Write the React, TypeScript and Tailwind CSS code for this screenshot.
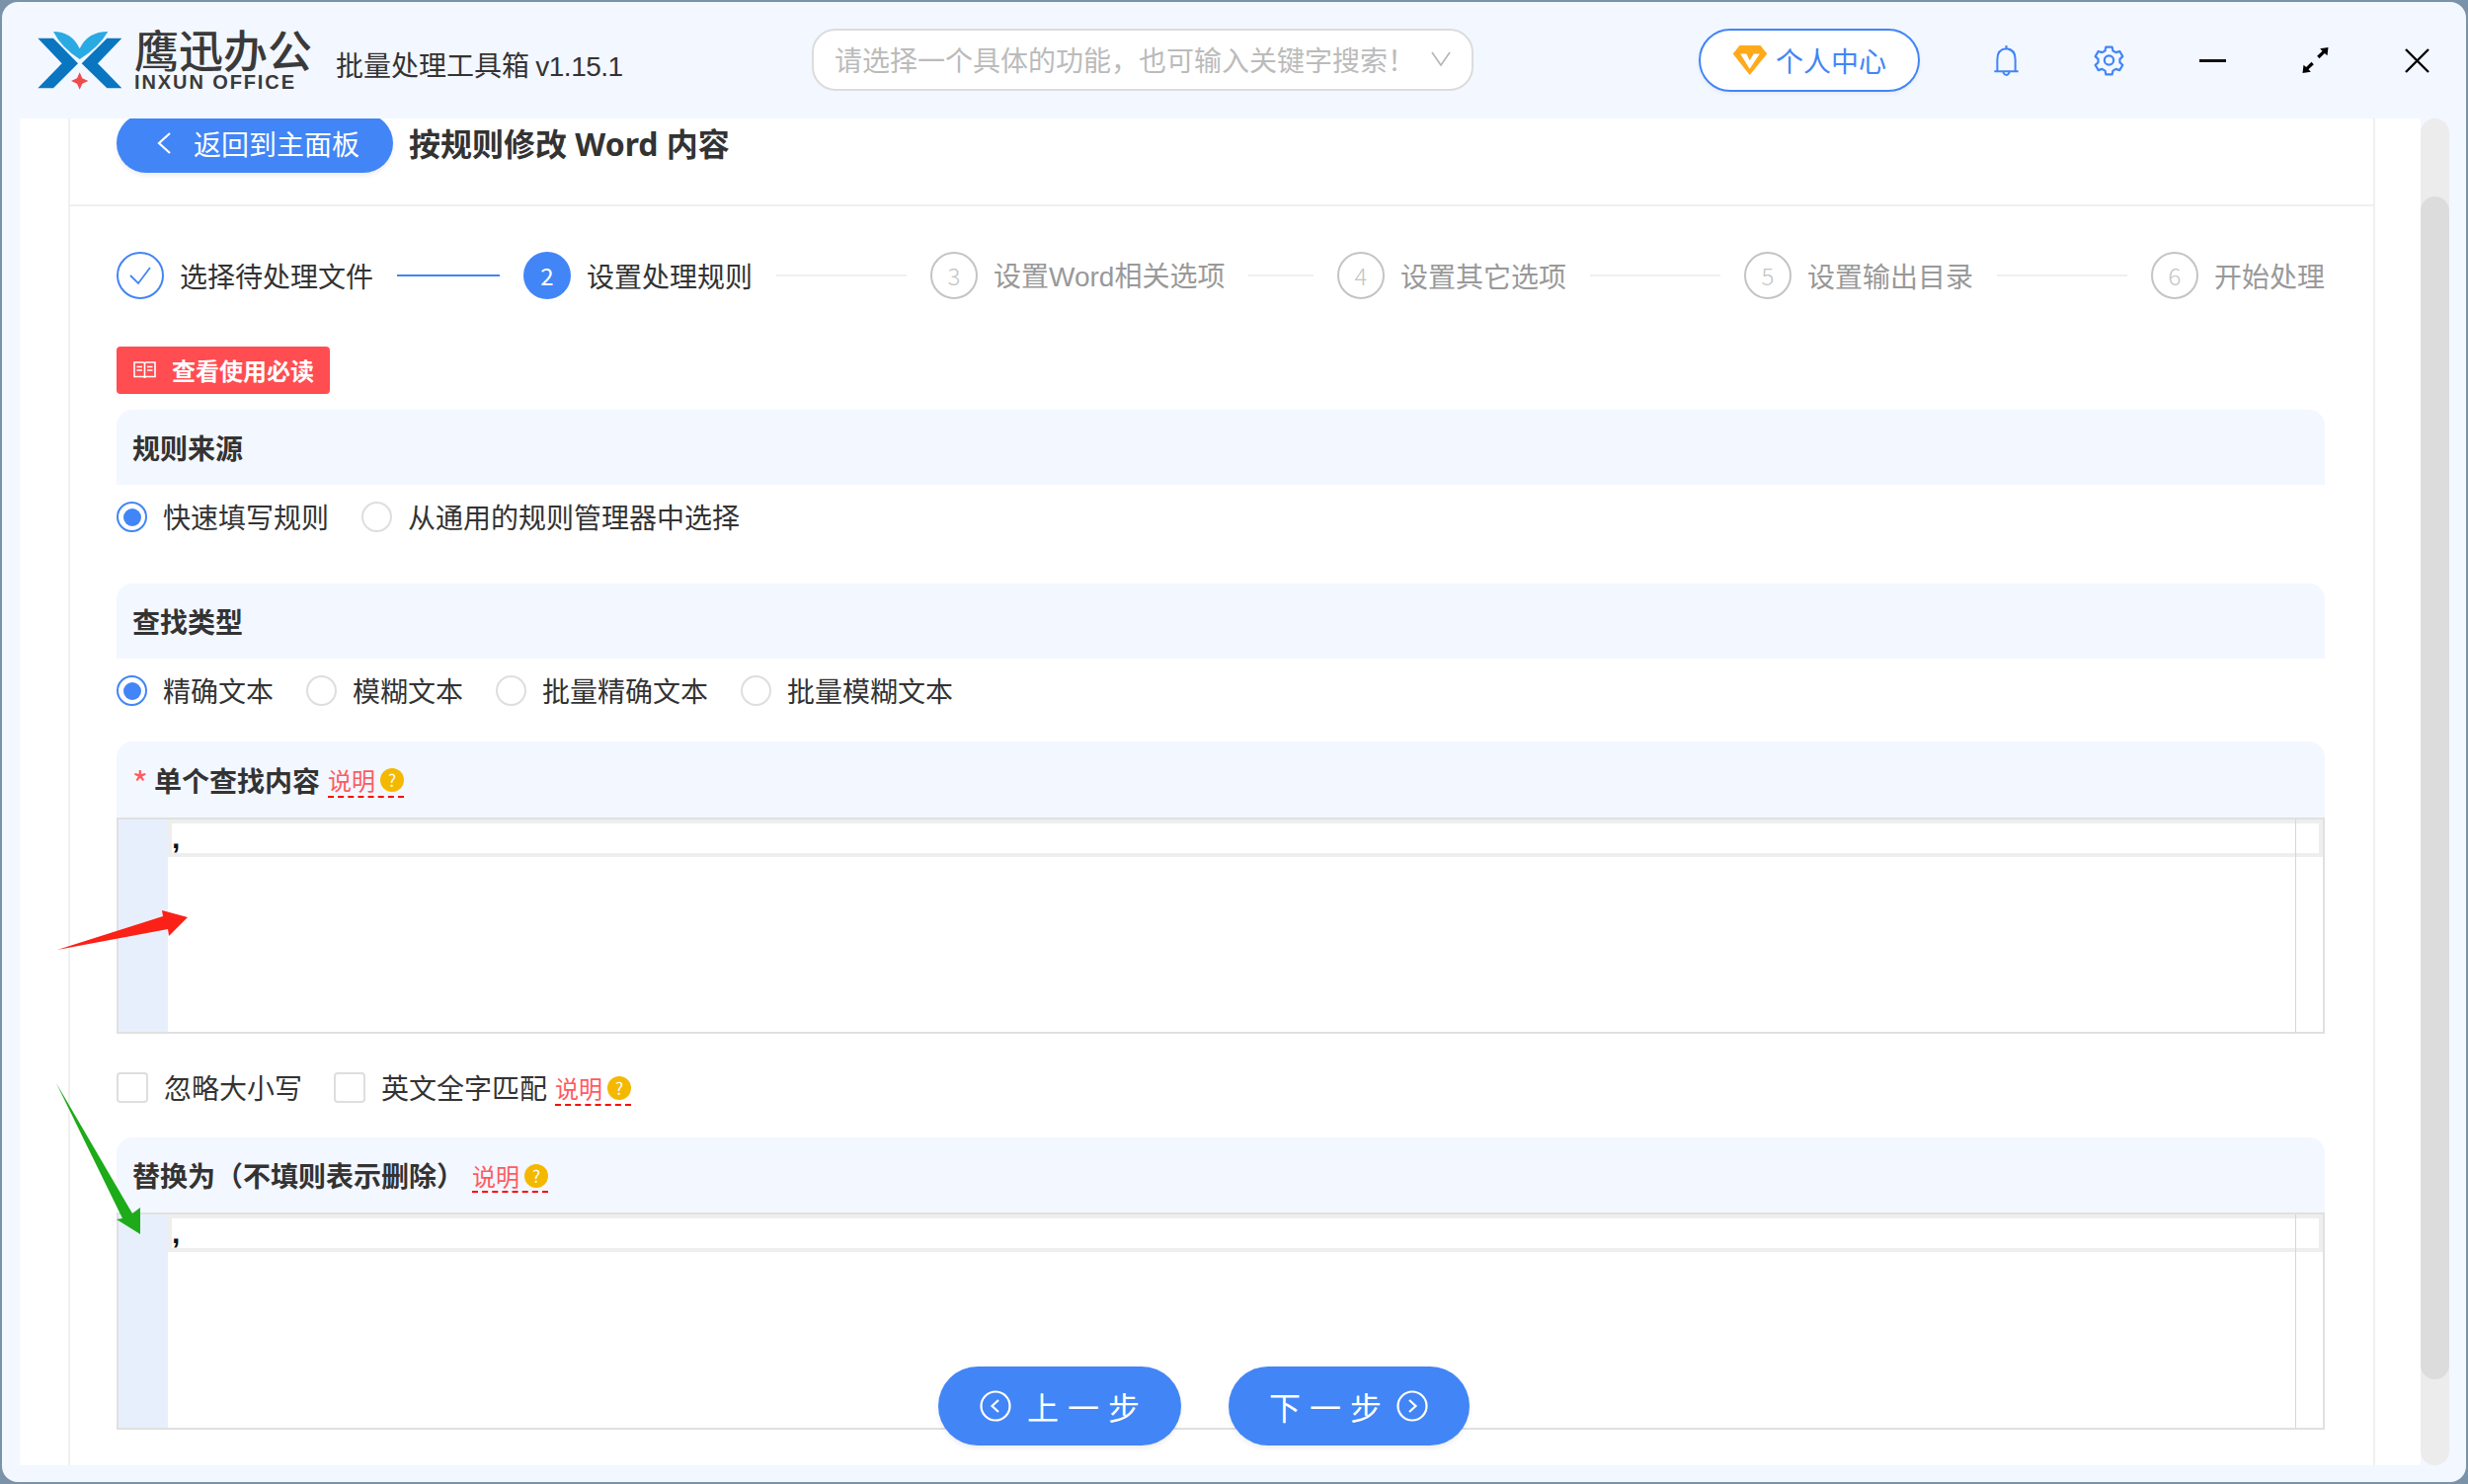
import React from "react";

const steps: { n: string; label: React.ReactNode; state: string }[] = [
  { n: "1", label: "选择待处理文件", state: "done" },
  { n: "2", label: "设置处理规则", state: "active" },
  { n: "3", label: <>设置<span className="font-['Liberation_Sans',sans-serif]">Word</span>相关选项</>, state: "todo" },
  { n: "4", label: "设置其它选项", state: "todo" },
  { n: "5", label: "设置输出目录", state: "todo" },
  { n: "6", label: "开始处理", state: "todo" },
];

function Logo() {
  return (
    <svg width="90" height="70" viewBox="21 0 270 210" className="shrink-0">
      <polygon points="25,38 72,38 147,115 72,190 25,190 98,115" fill="#0a76c0" />
      <polygon points="280,38 235,38 158,115 235,190 280,190 207,115" fill="#0a76c0" />
      <path d="M72 18 Q128 18 152 70 Q176 18 238 18 Q210 66 152 102 Q96 66 72 18Z" fill="#2aaae2" />
      <path d="M152 142 L160 160 L178 168 L160 176 L152 194 L144 176 L126 168 L144 160Z" fill="#f04a4a" />
    </svg>
  );
}

function Radio({ checked, label, first }: { checked?: boolean; label: string; first?: boolean }) {
  return (
    <div className={first ? "flex items-center gap-[16px]" : "flex items-center gap-[16px] ml-[33px]"}>
      <span className={checked ? "w-[31px] h-[31px] rounded-full border-2 border-[#4285f6] flex items-center justify-center" : "w-[31px] h-[31px] rounded-full border-2 border-[#dedede]"}>
        {checked ? <span className="w-[18px] h-[18px] rounded-full bg-[#4285f6]" /> : null}
      </span>
      <span className="text-[28px] leading-[31px] text-[#333]">{label}</span>
    </div>
  );
}

function Explain({ className }: { className?: string }) {
  return (
    <span className={`inline-flex items-center h-[36px] border-b-2 border-dashed border-[#f00] ${className ?? ""}`}>
      <span className="text-[24px] leading-[34px] pt-[3px] text-[#ff5a5f] font-normal">说明</span>
      <span className="ml-[5px] mt-[3px] w-[24px] h-[24px] rounded-full bg-[#f5b800] text-white text-[17px] leading-[24px] text-center font-normal">?</span>
    </span>
  );
}

function SectionHead({ children, h = 76 }: { children: React.ReactNode; h?: number }) {
  return (
    <div className={`${h === 77 ? "h-[77px]" : "h-[76px]"} rounded-t-[16px] bg-[#f3f7ff] px-4 flex items-center text-[28px] font-bold text-[#333]`}>
      {children}
    </div>
  );
}

function Editor({ heightClass }: { heightClass: string }) {
  return (
    <div className={`${heightClass} border-2 border-[#e0e0e0] flex`}>
      <div className="w-[50px] bg-[#e8effc]" />
      <div className="flex-1 relative">
        <div className="h-[38px] border-4 border-[#eeeeee] font-['Liberation_Sans',sans-serif] text-[30px] font-bold leading-[30px] text-[#111]">
          ,
        </div>
        <div className="absolute top-0 bottom-0 left-[2154px] w-px bg-[#d6d6d6]" />
      </div>
    </div>
  );
}

export default function App() {
  return (
    <div className="w-[2499px] h-[1503px] bg-[#7b93a8] p-[2px] overflow-hidden font-['Noto_Sans_CJK_SC',sans-serif]">
      <div className="relative w-full h-full rounded-[16px] bg-[#f3f7ff] flex flex-col overflow-hidden">
        {/* Title bar */}
        <div className="h-[118px] flex items-center shrink-0">
          <div className="w-[820px] flex items-center shrink-0">
            <div className="ml-[35px]"><Logo /></div>
            <div className="ml-[9px] w-[186px] flex flex-col">
              <span className="text-[45px] leading-[40px] font-medium text-[#3a3a3a] whitespace-nowrap">鹰迅办公</span>
              <span className="mt-[3px] text-[20px] leading-[20px] font-bold tracking-[1.9px] text-[#3a3a3a] whitespace-nowrap font-['Liberation_Sans',sans-serif]">INXUN OFFICE</span>
            </div>
            <span className="ml-[18px] mt-[10px] text-[28px] leading-[36px] text-[#333] whitespace-nowrap">
              批量处理工具箱 <span className="font-['Liberation_Sans',sans-serif] tracking-[-0.5px]">v1.15.1</span>
            </span>
          </div>
          <div className="w-[670px] h-[63px] -mt-[2px] rounded-[24px] bg-white border-2 border-[#dcdcdc] flex items-center pl-[21px] pr-[20px] shrink-0">
            <span className="text-[28px] leading-[36px] text-[#bbbbbb] whitespace-nowrap flex-1">请选择一个具体的功能，也可输入关键字搜索！</span>
            <svg width="22" height="16" viewBox="0 0 22 16" fill="none" stroke="#b5b5b5" strokeWidth="1.6">
              <path d="M2 1 L11 14 L20 1" />
            </svg>
          </div>
          <div className="ml-[228px] w-[224px] h-[64px] rounded-full bg-white border-2 border-[#4285f6] flex items-center pl-[32px] gap-[8px] shrink-0 shadow-[0_2px_4px_rgba(0,0,0,0.06)]">
            <svg width="36" height="32" viewBox="28 38 106 92" className="shrink-0">
              <polygon points="30,65 50,40 112,40 132,65 80,128" fill="#ffa91c" />
              <polygon points="52,65 70,65 80,85 92,65 110,65 80,110" fill="#fff" />
            </svg>
            <span className="text-[28px] leading-[36px] text-[#4285f6] whitespace-nowrap">个人中心</span>
          </div>
          <svg className="ml-[75px] shrink-0" width="25" height="33" viewBox="29 26 74 96" fill="none" stroke="#4285f6" strokeWidth="6">
            <path d="M39 106 V70 Q39 40 66 38 Q93 40 93 70 V106" />
            <path d="M30 106 H102" />
            <path d="M66 28 V38" />
            <path d="M56 108 Q66 126 76 108" />
          </svg>
          <svg className="ml-[76px] shrink-0" width="31" height="32" viewBox="0 0 24 24" fill="none" stroke="#4285f6" strokeWidth="1.7" strokeLinejoin="round">
            <path d="M9.6 1.6 h4.8 l.7 3 2.3 1.3 3-.9 2.3 4-2.2 2.1v2.6l2.2 2.1-2.3 4-3-.9-2.3 1.3-.7 3 h-4.8 l-.7-3-2.3-1.3-3 .9-2.3-4 2.2-2.1v-2.6L1.3 9l2.3-4 3 .9 2.3-1.3z" />
            <circle cx="12" cy="12" r="3.6" />
          </svg>
          <span className="ml-[76px] w-[27px] h-[3px] bg-[#111] shrink-0" />
          <svg className="ml-[77px] shrink-0" width="27" height="26" viewBox="962 36 80 78" fill="#000" stroke="none">
            <polygon points="1016,40 1041,36 1038,61 1030,54 1014,70 1007,62 1023,47" />
            <polygon points="988,110 963,114 966,89 974,96 990,80 997,88 981,103" />
          </svg>
          <svg className="ml-[77px] shrink-0" width="25" height="25" viewBox="0 0 25 25" fill="none" stroke="#000" strokeWidth="2.4">
            <path d="M1 1 L24 24 M24 1 L1 24" />
          </svg>
        </div>

        {/* Body */}
        <div className="flex-1 min-h-0 flex pl-[18px] pr-[17px] pb-[17px]">
          <div className="flex-1 min-w-0 bg-white overflow-hidden">
            <div className="ml-[49px] w-[2336px] h-full border-x-2 border-[#f0f0f0]">
              <div className="h-[89px] border-b-2 border-[#f0f0f0] px-[47px] flex items-start">
                <div className="-mt-[5px] w-[280px] h-[60px] rounded-full bg-[#4285f6] flex items-center pl-[40px] shadow-[0_3px_4px_rgba(0,0,0,0.07)] shrink-0">
                  <svg width="16" height="24" viewBox="0 0 16 24" fill="none" stroke="#fff" strokeWidth="2.2">
                    <path d="M14 2 L3 12 L14 22" />
                  </svg>
                  <span className="ml-[22px] text-[28px] leading-[36px] text-white whitespace-nowrap">返回到主面板</span>
                </div>
                <span className="ml-4 -mt-[6px] text-[32px] leading-[60px] font-bold text-[#333] whitespace-pre">按规则修改<span className="font-['Noto_Sans',sans-serif]"> Word </span>内容</span>
              </div>

              <div className="pl-[47px] pr-[49px]">
                {/* Steps */}
                <div className="mt-[46px] flex h-[48px]">
                  {steps.map((s, i) => (
                    <div key={s.n} className={i < 5 ? "w-[412px] flex items-center shrink-0" : "flex-1 flex items-center"}>
                      {s.state === "done" ? (
                        <span className="w-[48px] h-[48px] rounded-full border-2 border-[#4285f6] flex items-center justify-center shrink-0">
                          <svg width="24" height="20" viewBox="0 0 24 20" fill="none" stroke="#4285f6" strokeWidth="1.8">
                            <path d="M2 10 L10 18 L22 2" />
                          </svg>
                        </span>
                      ) : s.state === "active" ? (
                        <span className="w-[48px] h-[48px] rounded-full bg-[#4285f6] text-white text-[24px] flex items-center justify-center shrink-0">{s.n}</span>
                      ) : (
                        <span className="w-[48px] h-[48px] rounded-full border-2 border-[#c4c4c4] text-[#c4c4c4] text-[24px] font-light flex items-center justify-center shrink-0">{s.n}</span>
                      )}
                      <span className={s.state === "todo" ? "ml-[16px] text-[28px] leading-[36px] text-[#999] whitespace-nowrap" : "ml-[16px] text-[28px] leading-[36px] text-[#333] whitespace-nowrap"}>{s.label}</span>
                      {i < 5 ? (
                        <span className={s.state === "done" ? "mx-[24px] flex-1 h-[2px] bg-[#4285f6]" : "mx-[24px] flex-1 h-[2px] bg-[#efefef]"} />
                      ) : null}
                    </div>
                  ))}
                </div>

                {/* Notice */}
                <div className="mt-[48px] w-[216px] h-[48px] rounded-[4px] bg-[#ff4d51] flex items-center pl-[17px] gap-[16px]">
                  <svg width="23" height="18" viewBox="0 0 23 18" fill="none" stroke="#fff" strokeWidth="1.6">
                    <path d="M1 1 H10 Q11.5 1 11.5 3 V17 Q11.5 15.5 10 15.5 H1Z M22 1 H13 Q11.5 1 11.5 3 V17 Q11.5 15.5 13 15.5 H22Z" />
                    <path d="M3.5 5.5 H9 M3.5 9 H9 M14 5.5 H19.5 M14 9 H19.5" />
                  </svg>
                  <span className="text-[24px] leading-[48px] font-bold text-white whitespace-nowrap">查看使用必读</span>
                </div>

                {/* Rule source */}
                <div className="mt-[16px]"><SectionHead>规则来源</SectionHead></div>
                <div className="mt-[17px] flex items-center">
                  <Radio first checked label="快速填写规则" />
                  <Radio label="从通用的规则管理器中选择" />
                </div>

                {/* Search type */}
                <div className="mt-[52px]"><SectionHead>查找类型</SectionHead></div>
                <div className="mt-[17px] flex items-center">
                  <Radio first checked label="精确文本" />
                  <Radio label="模糊文本" />
                  <Radio label="批量精确文本" />
                  <Radio label="批量模糊文本" />
                </div>

                {/* Find content */}
                <div className="mt-[36px]">
                  <SectionHead h={77}>
                    <span className="text-[#ff5a5f] text-[34px] leading-[34px] pt-[6px] font-normal w-[22px]">*</span>
                    <span>单个查找内容</span>
                    <Explain className="ml-[8px]" />
                  </SectionHead>
                </div>
                <Editor heightClass="h-[219px]" />

                {/* Checks */}
                <div className="mt-[39px] h-[31px] flex items-center">
                  <span className="w-[32px] h-[31px] rounded-[4px] border-2 border-[#dedede] shrink-0" />
                  <span className="ml-[16px] text-[28px] leading-[31px] text-[#333] whitespace-nowrap">忽略大小写</span>
                  <span className="ml-[32px] w-[32px] h-[31px] rounded-[4px] border-2 border-[#dedede] shrink-0" />
                  <span className="ml-[16px] text-[28px] leading-[31px] text-[#333] whitespace-nowrap">英文全字匹配</span>
                  <Explain className="ml-[8px]" />
                </div>

                {/* Replace */}
                <div className="mt-[35px]">
                  <SectionHead>
                    <span>替换为（不填则表示删除）</span>
                    <Explain className="ml-[8px]" />
                  </SectionHead>
                </div>
                <Editor heightClass="h-[220px]" />
              </div>
            </div>
          </div>

          {/* Scrollbar */}
          <div className="w-[29px] h-full bg-[#ececec] rounded-full overflow-hidden pt-[79px] shrink-0">
            <div className="h-[1198px] bg-[#dcdcdc] rounded-full" />
          </div>
        </div>

        {/* Floating action buttons */}
        <div className="absolute left-[948px] top-[1382px] flex gap-[48px]">
          <div className="w-[246px] h-[80px] rounded-full bg-[#4285f6] flex items-center pl-[42px] shadow-[0_3px_5px_rgba(0,0,0,0.07)]">
            <svg width="32" height="32" viewBox="0 0 32 32" fill="none" stroke="#fff" strokeWidth="2.2">
              <circle cx="16" cy="16" r="14.5" />
              <path d="M19 10 L12.5 16 L19 22" />
            </svg>
            <span className="ml-[16px] text-[32px] leading-[80px] tracking-[9px] text-white whitespace-nowrap">上一步</span>
          </div>
          <div className="w-[244px] h-[80px] rounded-full bg-[#4285f6] flex items-center pl-[41px] shadow-[0_3px_5px_rgba(0,0,0,0.07)]">
            <span className="text-[32px] leading-[80px] tracking-[9px] text-white whitespace-nowrap">下一步</span>
            <svg className="ml-[6px]" width="32" height="32" viewBox="0 0 32 32" fill="none" stroke="#fff" strokeWidth="2.2">
              <circle cx="16" cy="16" r="14.5" />
              <path d="M13 10 L19.5 16 L13 22" />
            </svg>
          </div>
        </div>

        {/* Annotation arrows */}
        <svg className="absolute left-[54px] top-[918px]" width="136" height="44" viewBox="56 920 136 44">
          <polygon points="58,962 165,928 164,922 190,929 171,948 170,941" fill="#fb2117" />
        </svg>
        <svg className="absolute left-[54px] top-[1093px]" width="92" height="160" viewBox="56 1095 92 160">
          <polygon points="57,1097 134,1229 142,1223 142,1250 118,1235 124,1234" fill="#1dab19" />
        </svg>
      </div>
    </div>
  );
}
